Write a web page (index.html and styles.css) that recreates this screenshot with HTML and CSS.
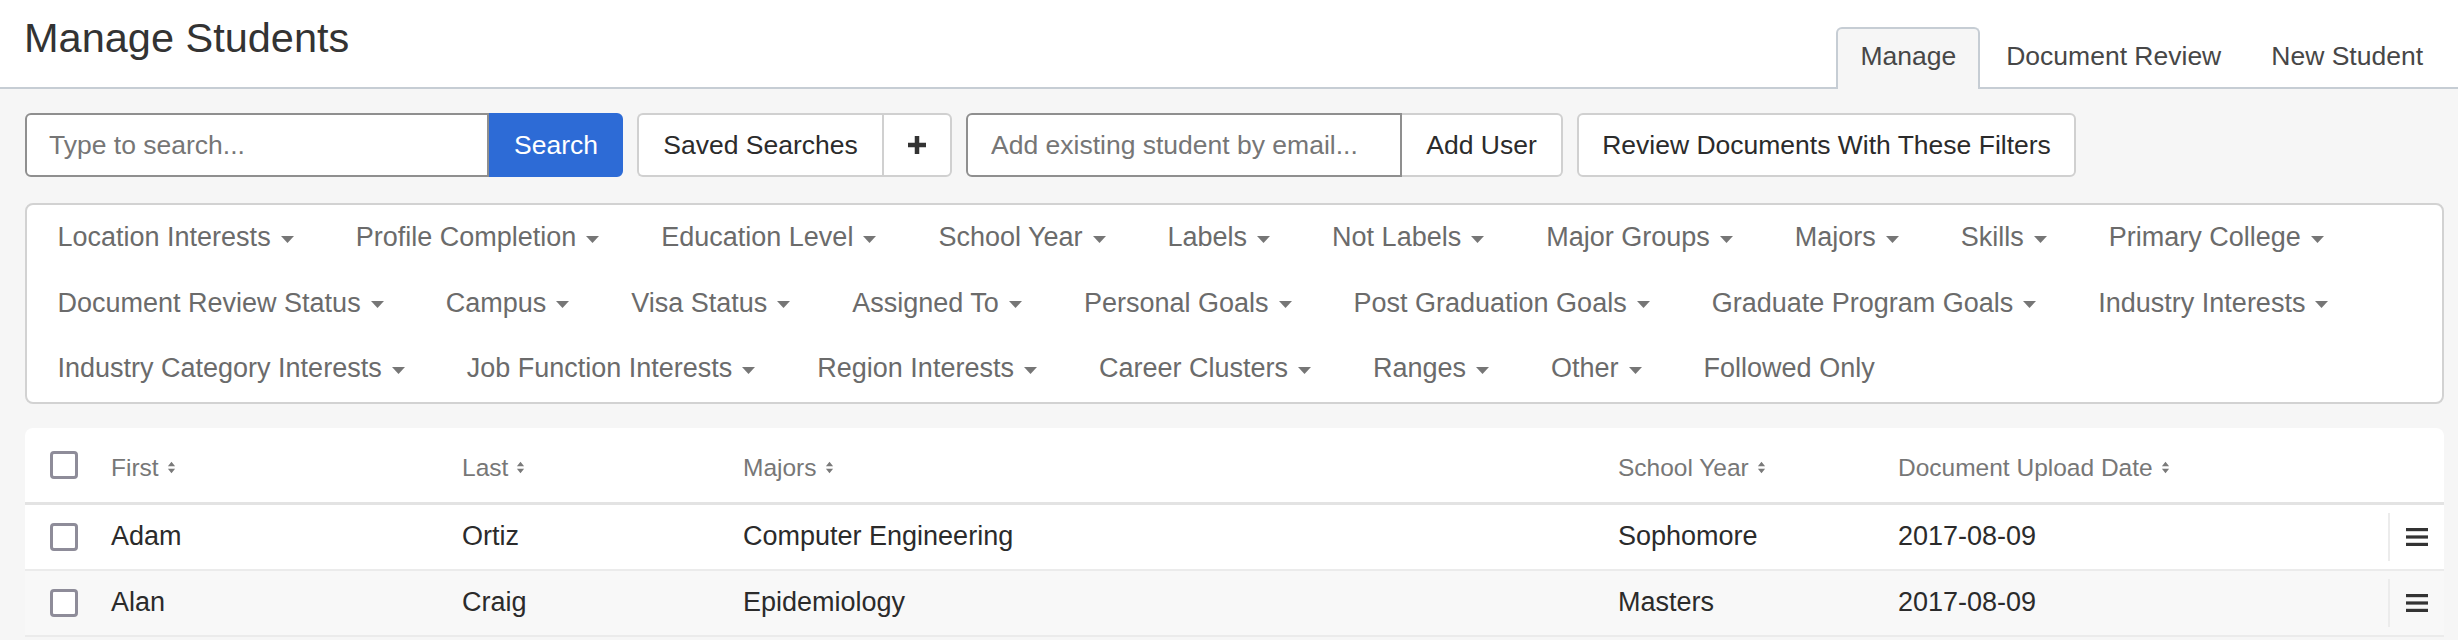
FILE: index.html
```html
<!DOCTYPE html>
<html lang="en">
<head>
<meta charset="utf-8">
<title>Manage Students</title>
<link rel="stylesheet" href="styles.css">
</head>
<body>
<header class="topbar">
  <h1 class="title">Manage Students</h1>
  <nav class="tabs">
    <a class="tab active">Manage</a>
    <a class="tab">Document Review</a>
    <a class="tab">New Student</a>
  </nav>
</header>
<main class="content">
  <div class="toolbar">
    <div class="group">
      <input class="field search-field" type="text" placeholder="Type to search...">
      <button class="btn btn-primary search-btn">Search</button>
    </div>
    <div class="group">
      <button class="btn btn-left saved-btn">Saved Searches</button>
      <button class="btn btn-right plus-btn"><svg class="plus" viewBox="0 0 18 18" width="18" height="18"><rect x="6.75" y="0" width="4.5" height="18" fill="#333"/><rect x="0" y="6.75" width="18" height="4.5" fill="#333"/></svg></button>
    </div>
    <div class="group">
      <input class="field email-field" type="text" placeholder="Add existing student by email...">
      <button class="btn btn-right adduser-btn">Add User</button>
    </div>
    <button class="btn review-btn">Review Documents With These Filters</button>
  </div>

  <div class="filters">
    <div class="filter">Location Interests<svg class="caret" viewBox="0 0 13 7"><path d="M0 0H13L6.5 7Z"/></svg></div>
    <div class="filter">Profile Completion<svg class="caret" viewBox="0 0 13 7"><path d="M0 0H13L6.5 7Z"/></svg></div>
    <div class="filter">Education Level<svg class="caret" viewBox="0 0 13 7"><path d="M0 0H13L6.5 7Z"/></svg></div>
    <div class="filter">School Year<svg class="caret" viewBox="0 0 13 7"><path d="M0 0H13L6.5 7Z"/></svg></div>
    <div class="filter">Labels<svg class="caret" viewBox="0 0 13 7"><path d="M0 0H13L6.5 7Z"/></svg></div>
    <div class="filter">Not Labels<svg class="caret" viewBox="0 0 13 7"><path d="M0 0H13L6.5 7Z"/></svg></div>
    <div class="filter">Major Groups<svg class="caret" viewBox="0 0 13 7"><path d="M0 0H13L6.5 7Z"/></svg></div>
    <div class="filter">Majors<svg class="caret" viewBox="0 0 13 7"><path d="M0 0H13L6.5 7Z"/></svg></div>
    <div class="filter">Skills<svg class="caret" viewBox="0 0 13 7"><path d="M0 0H13L6.5 7Z"/></svg></div>
    <div class="filter">Primary College<svg class="caret" viewBox="0 0 13 7"><path d="M0 0H13L6.5 7Z"/></svg></div>
    <div class="filter">Document Review Status<svg class="caret" viewBox="0 0 13 7"><path d="M0 0H13L6.5 7Z"/></svg></div>
    <div class="filter">Campus<svg class="caret" viewBox="0 0 13 7"><path d="M0 0H13L6.5 7Z"/></svg></div>
    <div class="filter">Visa Status<svg class="caret" viewBox="0 0 13 7"><path d="M0 0H13L6.5 7Z"/></svg></div>
    <div class="filter">Assigned To<svg class="caret" viewBox="0 0 13 7"><path d="M0 0H13L6.5 7Z"/></svg></div>
    <div class="filter">Personal Goals<svg class="caret" viewBox="0 0 13 7"><path d="M0 0H13L6.5 7Z"/></svg></div>
    <div class="filter">Post Graduation Goals<svg class="caret" viewBox="0 0 13 7"><path d="M0 0H13L6.5 7Z"/></svg></div>
    <div class="filter">Graduate Program Goals<svg class="caret" viewBox="0 0 13 7"><path d="M0 0H13L6.5 7Z"/></svg></div>
    <div class="filter">Industry Interests<svg class="caret" viewBox="0 0 13 7"><path d="M0 0H13L6.5 7Z"/></svg></div>
    <div class="filter">Industry Category Interests<svg class="caret" viewBox="0 0 13 7"><path d="M0 0H13L6.5 7Z"/></svg></div>
    <div class="filter">Job Function Interests<svg class="caret" viewBox="0 0 13 7"><path d="M0 0H13L6.5 7Z"/></svg></div>
    <div class="filter">Region Interests<svg class="caret" viewBox="0 0 13 7"><path d="M0 0H13L6.5 7Z"/></svg></div>
    <div class="filter">Career Clusters<svg class="caret" viewBox="0 0 13 7"><path d="M0 0H13L6.5 7Z"/></svg></div>
    <div class="filter">Ranges<svg class="caret" viewBox="0 0 13 7"><path d="M0 0H13L6.5 7Z"/></svg></div>
    <div class="filter">Other<svg class="caret" viewBox="0 0 13 7"><path d="M0 0H13L6.5 7Z"/></svg></div>
    <div class="filter">Followed Only</div>
  </div>

  <div class="table">
    <div class="thead">
      <div class="cell check-cell"><span class="checkbox"></span></div>
      <div class="cell th">First<svg class="sort" viewBox="0 0 10 16"><path d="M1 6.5L5 1.5L9 6.5Z M1 9.5L5 14.5L9 9.5Z"/></svg></div>
      <div class="cell th">Last<svg class="sort" viewBox="0 0 10 16"><path d="M1 6.5L5 1.5L9 6.5Z M1 9.5L5 14.5L9 9.5Z"/></svg></div>
      <div class="cell th">Majors<svg class="sort" viewBox="0 0 10 16"><path d="M1 6.5L5 1.5L9 6.5Z M1 9.5L5 14.5L9 9.5Z"/></svg></div>
      <div class="cell th">School Year<svg class="sort" viewBox="0 0 10 16"><path d="M1 6.5L5 1.5L9 6.5Z M1 9.5L5 14.5L9 9.5Z"/></svg></div>
      <div class="cell th">Document Upload Date<svg class="sort" viewBox="0 0 10 16"><path d="M1 6.5L5 1.5L9 6.5Z M1 9.5L5 14.5L9 9.5Z"/></svg></div>
      <div class="cell"></div>
    </div>
    <div class="row">
      <div class="cell check-cell"><span class="checkbox"></span></div>
      <div class="cell">Adam</div>
      <div class="cell">Ortiz</div>
      <div class="cell">Computer Engineering</div>
      <div class="cell">Sophomore</div>
      <div class="cell">2017-08-09</div>
      <div class="cell action-cell"><span class="menu"><svg viewBox="0 0 22 18" width="22" height="18"><rect y="0" width="22" height="3.2" fill="#333"/><rect y="7.4" width="22" height="3.2" fill="#333"/><rect y="14.8" width="22" height="3.2" fill="#333"/></svg></span></div>
    </div>
    <div class="row alt">
      <div class="cell check-cell"><span class="checkbox"></span></div>
      <div class="cell">Alan</div>
      <div class="cell">Craig</div>
      <div class="cell">Epidemiology</div>
      <div class="cell">Masters</div>
      <div class="cell">2017-08-09</div>
      <div class="cell action-cell"><span class="menu"><svg viewBox="0 0 22 18" width="22" height="18"><rect y="0" width="22" height="3.2" fill="#333"/><rect y="7.4" width="22" height="3.2" fill="#333"/><rect y="14.8" width="22" height="3.2" fill="#333"/></svg></span></div>
    </div>
  </div>
</main>
</body>
</html>
```

FILE: styles.css
```css
* { box-sizing: border-box; }

html, body {
  margin: 0;
  padding: 0;
  background: #f6f6f6;
  font-family: "Liberation Sans", Arial, Helvetica, sans-serif;
  color: #2b2b2b;
}

/* Header */
.topbar {
  display: flex;
  justify-content: space-between;
  align-items: flex-end;
  height: 89px;
  padding: 0 11px 0 24px;
  background: #ffffff;
  border-bottom: 2px solid #c6cdd4;
}

.title {
  align-self: flex-start;
  margin: 14px 0 0 0;
  font-size: 41.5px;
  line-height: 48px;
  font-weight: 400;
  color: #333333;
}

.tabs {
  display: flex;
  gap: 2px;
  margin-bottom: -2px;
}

.tab {
  font-size: 26.5px;
  line-height: 30px;
  padding: 12px 22px 18px;
  color: #474747;
  border: 2px solid transparent;
  border-bottom: none;
  border-radius: 6px 6px 0 0;
  cursor: pointer;
}

.tab.active {
  background: #f6f6f6;
  border-color: #c6cdd4;
}

/* Content */
.content {
  padding: 24px 14px 0 25px;
  background: #f6f6f6;
}

.toolbar {
  display: flex;
  gap: 14px;
  height: 64px;
}

.group {
  display: flex;
}

.field {
  height: 64px;
  border: 2px solid #8f8f8f;
  border-radius: 6px 0 0 6px;
  background: #ffffff;
  font-family: inherit;
  font-size: 26.5px;
  color: #2b2b2b;
  outline: none;
}

.field::placeholder {
  color: #767676;
}

.search-field {
  width: 464px;
  padding: 0 22px;
}

.email-field {
  width: 436px;
  padding: 0 23px;
}

.btn {
  height: 64px;
  border: 2px solid #d0d0d0;
  border-radius: 6px;
  background: #ffffff;
  font-family: inherit;
  font-size: 26.5px;
  color: #2b2b2b;
  padding: 0;
  display: flex;
  align-items: center;
  justify-content: center;
  cursor: pointer;
}

.btn-primary {
  background: #2d6bd6;
  border-color: #2d6bd6;
  color: #ffffff;
  border-radius: 0 6px 6px 0;
}

.btn-left {
  border-radius: 6px 0 0 6px;
}

.btn-right {
  border-radius: 0 6px 6px 0;
  border-left: none;
}

.search-btn { width: 134px; }
.saved-btn { width: 245px; border-right: none; }
.plus-btn { width: 70px; border-left: 2px solid #d0d0d0; }
.adduser-btn { width: 161px; }
.review-btn { width: 499px; }

.plus {
  display: block;
}

/* Filters */
.filters {
  margin-top: 26px;
  display: flex;
  flex-wrap: wrap;
  background: #ffffff;
  border: 2px solid #d2d2d2;
  border-radius: 8px;
}

.filter {
  height: 65.5px;
  display: flex;
  align-items: center;
  padding: 0 31.5px 0 30.5px;
  font-size: 27px;
  color: #6b6b6b;
  white-space: nowrap;
}

.caret {
  width: 13px;
  height: 7px;
  margin-left: 10px;
  margin-top: 3px;
  fill: #767676;
}

/* Table */
.table {
  margin-top: 24px;
  background: #ffffff;
  border-radius: 8px 8px 0 0;
}

.thead,
.row {
  display: grid;
  grid-template-columns: 86px 351px 281px 875px 280px 1fr 56px;
  align-items: center;
}

.thead {
  height: 77px;
  border-bottom: 3px solid #e3e3e3;
}

.row {
  height: 66px;
  border-bottom: 2px solid #ebebeb;
  font-size: 27px;
  color: #2b2b2b;
}

.row.alt {
  background: #f8f8f8;
}

.cell {
  display: flex;
  align-items: center;
  white-space: nowrap;
}

.check-cell {
  padding-left: 25px;
}

.checkbox {
  display: block;
  width: 28px;
  height: 28px;
  border: 3px solid #8e8c99;
  border-radius: 4px;
  background: #ffffff;
}

.th {
  font-size: 24.5px;
  color: #777777;
  padding-top: 6px;
}

.sort {
  width: 9px;
  height: 15px;
  margin-left: 8px;
  fill: #7a7a7a;
}

.action-cell {
  height: 100%;
}

.menu {
  display: flex;
  align-items: center;
  height: 48px;
  border-left: 2px solid #ececec;
  padding-left: 16px;
}

.menu svg {
  display: block;
}
```
